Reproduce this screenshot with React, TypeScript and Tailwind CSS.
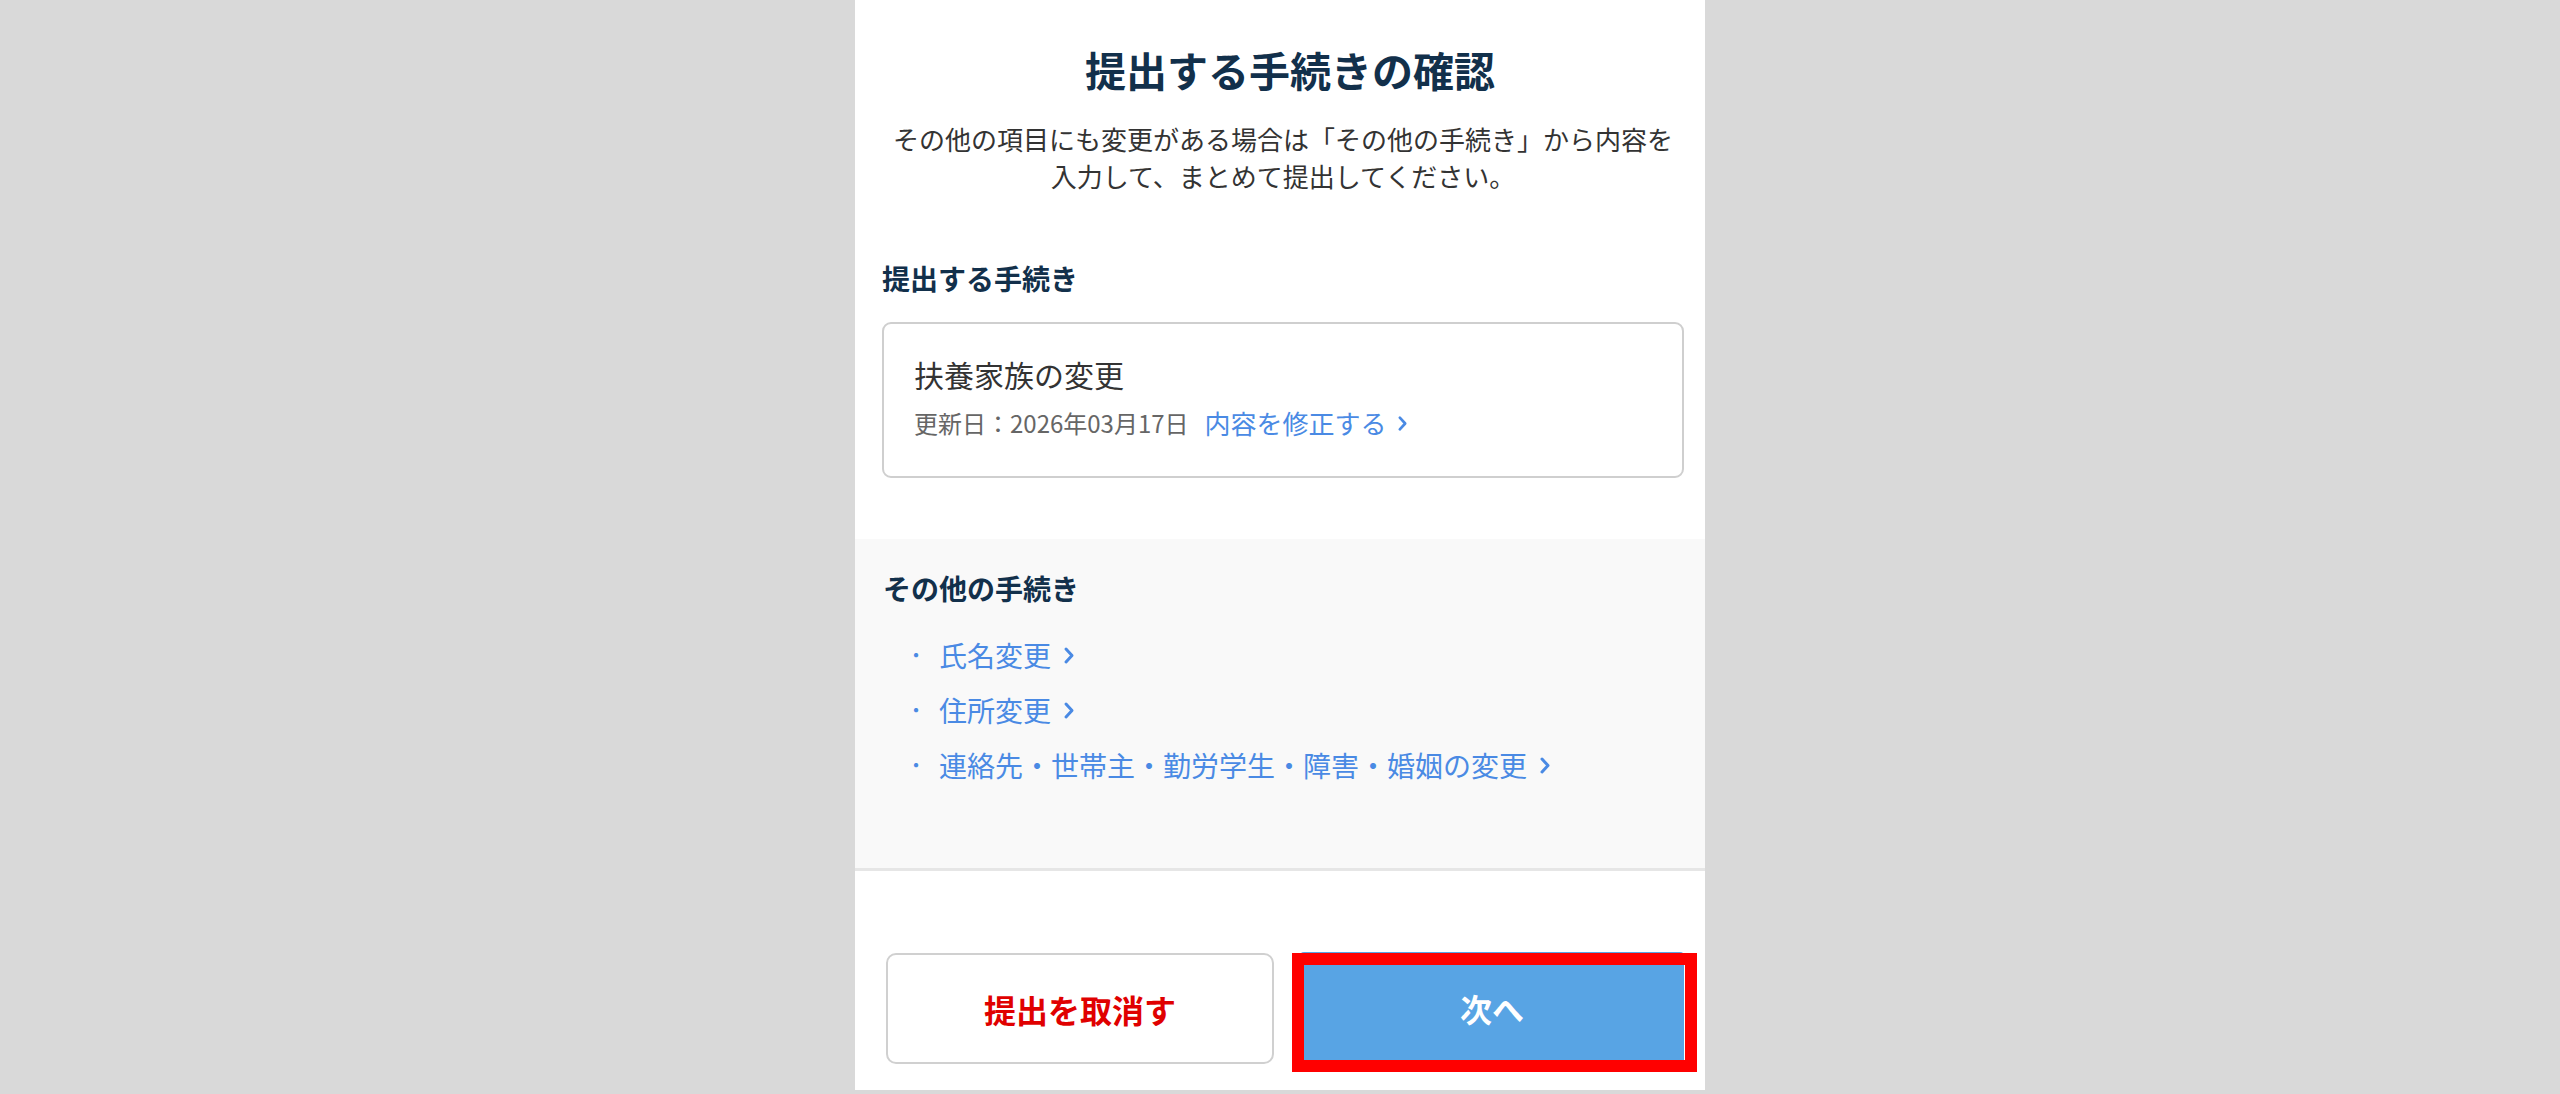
import React from "react";

const Chevron = ({ size = "md" }: { size?: "md" | "lg" }) => (
  <svg
    width={size === "lg" ? 12 : 11}
    height={size === "lg" ? 19 : 17}
    viewBox="0 0 12 19"
    className="inline-block shrink-0"
  >
    <path d="M3 3 L9 9.5 L3 16" fill="none" stroke="currentColor" strokeWidth="3" strokeLinecap="round" strokeLinejoin="round" />
  </svg>
);

const otherProcedures = ["氏名変更", "住所変更", "連絡先・世帯主・勤労学生・障害・婚姻の変更"];

const App = () => {
  return (
    <div
      className="min-h-screen bg-[#d9d9d9] flex justify-center"
      style={{ fontFamily: '"Noto Sans CJK JP", "Noto Sans", sans-serif' }}
    >
      <div className="w-[850px] h-[1090px] bg-white flex flex-col">
        {/* Header + selected procedure */}
        <section className="pt-[44px] pl-[27px] pr-[21px] pb-[61px]">
          <h1 className="text-center text-[41px] leading-[50px] font-bold text-[#12304b] pl-[14px]">
            提出する手続きの確認
          </h1>
          <p className="mt-[26px] text-center text-[26px] leading-[37px] text-[#333]">
            その他の項目にも変更がある場合は「その他の手続き」から内容を
            <br />
            入力して、まとめて提出してください。
          </p>

          <h2 className="mt-[64px] text-[28px] leading-[40px] font-bold text-[#12304b]">提出する手続き</h2>

          <div className="mt-[24px] h-[156px] border-2 border-[#cfcfcf] rounded-[9px] pl-[30px] pt-[30px]">
            <div className="text-[30px] leading-[40px] text-[#333]">扶養家族の変更</div>
            <div className="mt-[12px] flex items-center text-[24px] leading-[34px]">
              <span className="text-[#666]">更新日：2026年03月17日</span>
              <a className="ml-[16px] flex items-center gap-[10px] text-[26px] text-[#4a8ae4]" href="#">
                内容を修正する
                <Chevron />
              </a>
            </div>
          </div>
        </section>

        {/* Other procedures */}
        <section className="bg-[#f9f9f9] border-b-[3px] border-[#e6e6e6] pl-[28px] pr-[21px] pt-[29px] pb-[83px]">
          <h2 className="text-[28px] leading-[40px] font-bold text-[#12304b]">その他の手続き</h2>
          <ul className="mt-[27px] flex flex-col gap-[15px]">
            {otherProcedures.map((item) => (
              <li key={item} className="flex items-center text-[28px] leading-[40px] text-[#4a8ae4]">
                <span className="w-[56px] pl-[23px] text-[20px]">・</span>
                <span>{item}</span>
                <span className="ml-[12px] flex items-center">
                  <Chevron size="lg" />
                </span>
              </li>
            ))}
          </ul>
        </section>

        {/* Actions */}
        <div className="flex-1 flex items-end gap-[26px] pl-[31px] pr-[21px] pb-[26px]">
          <button className="flex-1 h-[111px] bg-white border-2 border-[#d0d0d0] rounded-[10px] text-[32px] font-bold text-[#e00000]">
            提出を取消す
          </button>
          <div className="relative flex-1 h-[112px]">
            <button className="w-full h-full bg-[#58a4e4] rounded-[4px] text-[32px] font-bold text-white">次へ</button>
            {/* highlight frame */}
            <div className="absolute top-[1px] -left-[8px] -right-[13px] -bottom-[8px] border-[12px] border-[#ff0000] pointer-events-none" />
          </div>
        </div>
      </div>
    </div>
  );
};

export default App;
